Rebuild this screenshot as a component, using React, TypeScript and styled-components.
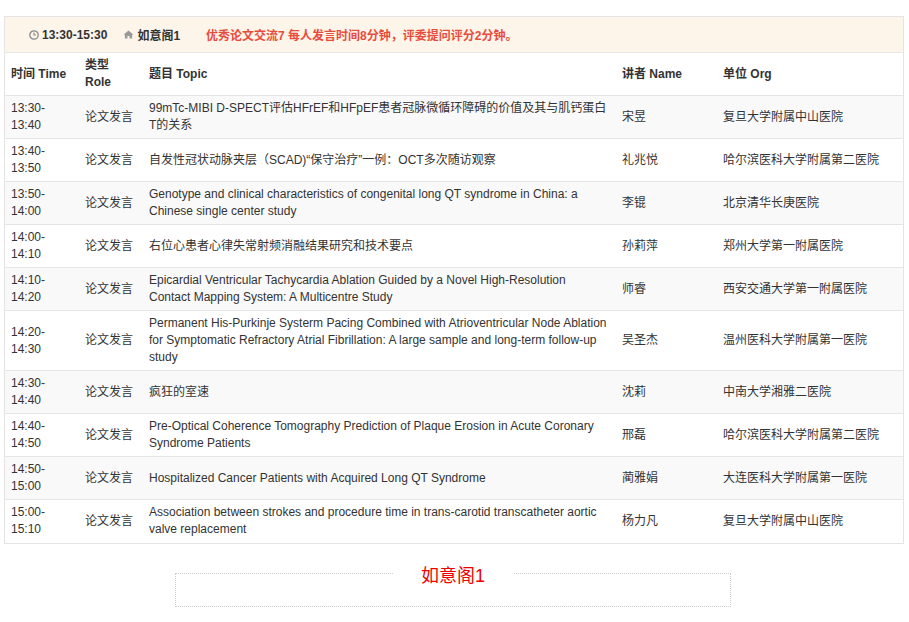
import styled, {createGlobalStyle} from 'styled-components';

const GlobalStyle = createGlobalStyle`
  body {
    margin: 0;
    font-family: "Liberation Sans", Arial, "Noto Sans CJK SC", sans-serif;
    font-size: 12px;
    color: #333;
    background: #fff;
  }
`;

const rows = [
  ['13:30-13:40', '99mTc-MIBI D-SPECT评估HFrEF和HFpEF患者冠脉微循环障碍的价值及其与肌钙蛋白T的关系', '宋昱', '复旦大学附属中山医院'],
  ['13:40-13:50', '自发性冠状动脉夹层（SCAD)“保守治疗”一例：OCT多次随访观察', '礼兆悦', '哈尔滨医科大学附属第二医院'],
  ['13:50-14:00', 'Genotype and clinical characteristics of congenital long QT syndrome in China: a Chinese single center study', '李锟', '北京清华长庚医院'],
  ['14:00-14:10', '右位心患者心律失常射频消融结果研究和技术要点', '孙莉萍', '郑州大学第一附属医院'],
  ['14:10-14:20', 'Epicardial Ventricular Tachycardia Ablation Guided by a Novel High-Resolution Contact Mapping System: A Multicentre Study', '师睿', '西安交通大学第一附属医院'],
  ['14:20-14:30', 'Permanent His-Purkinje Systerm Pacing Combined with Atrioventricular Node Ablation for Symptomatic Refractory Atrial Fibrillation: A large sample and long-term follow-up study', '吴圣杰', '温州医科大学附属第一医院'],
  ['14:30-14:40', '疯狂的室速', '沈莉', '中南大学湘雅二医院'],
  ['14:40-14:50', 'Pre-Optical Coherence Tomography Prediction of Plaque Erosion in Acute Coronary Syndrome Patients', '邢磊', '哈尔滨医科大学附属第二医院'],
  ['14:50-15:00', 'Hospitalized Cancer Patients with Acquired Long QT Syndrome', '蔺雅娟', '大连医科大学附属第一医院'],
  ['15:00-15:10', 'Association between strokes and procedure time in trans-carotid transcatheter aortic valve replacement', '杨力凡', '复旦大学附属中山医院'],
];

const Page = styled.div`
  padding: 16px 5px 0 4px;
`;

const Panel = styled.div`
  border: 1px solid #e4e4e4;
`;

const InfoBar = styled.div`
  display: flex;
  align-items: center;
  height: 35px;
  padding-left: 24px;
  background: #fdf4ea;
  border-bottom: 1px solid #e8e8e8;
  font-weight: bold;
  color: #333;
`;

const InfoItem = styled.span`
  display: flex;
  align-items: center;
  gap: 3px;
  margin-right: 16px;
`;

const Notice = styled.span`
  color: #e84c3d;
  margin-left: 10px;
`;

const Table = styled.table`
  width: 100%;
  border-collapse: collapse;
  line-height: 17px;
`;

const Th = styled.th<{w?: number}>`
  text-align: left;
  font-weight: bold;
  padding: 4px 6px;
  height: 42px;
  box-sizing: border-box;
  vertical-align: middle;
  width: ${({w}) => (w ? `${w}px` : 'auto')};
`;

const Tr = styled.tr<{striped: boolean}>`
  background: ${({striped}) => (striped ? '#f9f9f9' : '#fff')};
  border-top: 1px solid #e6e6e6;
`;

const Td = styled.td`
  padding: 4px 6px;
  height: 43px;
  box-sizing: border-box;
  vertical-align: middle;
`;

const Fieldset = styled.fieldset`
  width: 556px;
  margin: 17px auto 0;
  box-sizing: border-box;
  border: 1px dotted #ccc;
  height: 46px;
  padding: 0;
  position: relative;
  left: -1px;
`;

const Legend = styled.legend`
  margin: 0 auto;
  padding: 0 28px;
  font-size: 18px;
  color: #e00;
`;

const Clock = () => (
  <svg width="10" height="10" viewBox="0 0 10 10">
    <circle cx="5" cy="5" r="4.2" fill="none" stroke="#888" strokeWidth="1.3" />
    <path d="M5 2.6V5h1.9" fill="none" stroke="#888" strokeWidth="1.1" />
  </svg>
);

const Home = () => (
  <svg width="11" height="9" viewBox="0 0 11 9">
    <path d="M5.5 0.5L0.5 4.8h1.4V8.6h2.6V6h2V8.6h2.6V4.8h1.4z" fill="#999" />
  </svg>
);

export default function App() {
  return (
    <Page>
      <GlobalStyle />
      <Panel>
        <InfoBar>
          <InfoItem><Clock />13:30-15:30</InfoItem>
          <InfoItem><Home />如意阁1</InfoItem>
          <Notice>优秀论文交流7 每人发言时间8分钟，评委提问评分2分钟。</Notice>
        </InfoBar>
        <Table>
          <thead>
            <tr>
              <Th w={74}>时间 Time</Th>
              <Th w={64}>类型<br />Role</Th>
              <Th w={473}>题目 Topic</Th>
              <Th w={101}>讲者 Name</Th>
              <Th>单位 Org</Th>
            </tr>
          </thead>
          <tbody>
            {rows.map(([time, topic, name, org], i) => {
              const [a, b] = time.split('-');
              return (
                <Tr key={time} striped={i % 2 === 0}>
                  <Td>{a}-<br />{b}</Td>
                  <Td>论文发言</Td>
                  <Td>{topic}</Td>
                  <Td>{name}</Td>
                  <Td>{org}</Td>
                </Tr>
              );
            })}
          </tbody>
        </Table>
      </Panel>
      <Fieldset>
        <Legend>如意阁1</Legend>
      </Fieldset>
    </Page>
  );
}
